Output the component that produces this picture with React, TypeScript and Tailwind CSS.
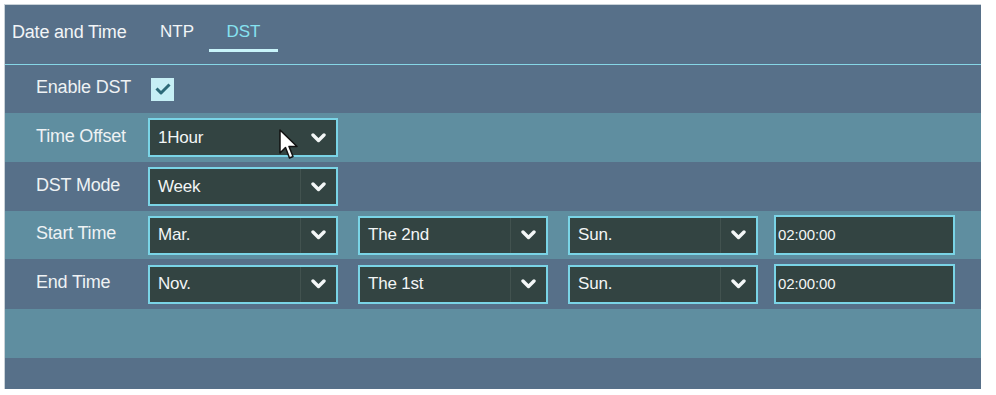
const Chevron = () => (
  <svg width="15" height="10" viewBox="0 0 15 10" className="block">
    <path d="M2 2 L7.5 7.5 L13 2" fill="none" stroke="#f4f7f7" strokeWidth="3.4" strokeLinecap="round" strokeLinejoin="round" />
  </svg>
);

const Select = ({ value, divider = true }: { value: string; divider?: boolean }) => (
  <div className="w-[190px] h-[39px] border-2 border-[#7ad4e6] bg-[#334442] flex items-center">
    <span className="flex-1 pl-2 text-[17px] tracking-[-0.2px] text-[#f2f5f5]">{value}</span>
    <div className={`w-[36px] h-full flex items-center justify-center ${divider ? "border-l border-[#42524f]" : ""}`}>
      <Chevron />
    </div>
  </div>
);

const TimeInput = ({ value }: { value: string }) => (
  <div className="w-[181px] h-[40px] border-2 border-[#7ad4e6] bg-[#334442] flex items-center">
    <span className="pl-[2px] text-[15px] tracking-[-0.1px] text-[#f2f5f5]">{value}</span>
  </div>
);

const Row = ({ label, light, children, h = "h-[49px]" }: { label?: string; light?: boolean; children?: React.ReactNode; h?: string }) => (
  <div className={`${h} flex items-center ${light ? "bg-[#5f8ea0]" : "bg-[#577089]"}`}>
    <div className="w-[143px] pl-[31px] text-[18px] tracking-[-0.2px] text-[#eef2f4] -mt-[3px]">{label}</div>
    <div className="flex items-center gap-[20px]">{children}</div>
  </div>
);

const Cursor = () => (
  <svg width="20" height="31" viewBox="0 0 20 31" className="absolute left-[274px] top-[124px]">
    <path d="M1 1 L1 24 L6.5 18.5 L10.5 29 L14 27.5 L10 17.5 L18 17.5 Z" fill="#ffffff" stroke="#111111" strokeWidth="1.5" strokeLinejoin="round" />
  </svg>
);

export default function App() {
  return (
    <div className="w-[996px] h-[395px] bg-white p-1 font-['Liberation_Sans',Arial,sans-serif]">
      <div className="relative w-[977px] h-[385px] bg-[#577089] border-l border-t border-[#c9d2d8] overflow-hidden">
        <div className="h-[59px] flex items-start pt-[14px] pl-[7px] text-[#f2f5f7]">
          <span className="w-[120px] text-[18px] tracking-[-0.2px]">Date and Time</span>
          <span className="ml-[28px] text-[17px]">NTP</span>
          <div className="ml-[15px] w-[69px] flex flex-col items-center">
            <span className="text-[17px] text-[#86e2f0]">DST</span>
            <div className="mt-[4px] w-[69px] h-[3px] bg-[#c8f4fa]" />
          </div>
        </div>
        <div className="h-[1px] bg-[#86d6e6]" />
        <Row label="Enable DST" h="h-[48px]">
          <div className="ml-[3px] w-[23px] h-[23px] bg-[#c6eff5] flex items-center justify-center">
            <svg width="18" height="14" viewBox="0 0 18 14">
              <path d="M2.5 6.5 L7 11 L15.5 2.5" fill="none" stroke="#2c6a78" strokeWidth="3" strokeLinejoin="round" />
            </svg>
          </div>
        </Row>
        <Row label="Time Offset" light>
          <Select value="1Hour" divider={false} />
        </Row>
        <Row label="DST Mode">
          <Select value="Week" />
        </Row>
        <Row label="Start Time" light h="h-[48px]">
          <Select value="Mar." />
          <Select value="The 2nd" />
          <Select value="Sun." />
          <div className="-ml-[4px]">
            <TimeInput value="02:00:00" />
          </div>
        </Row>
        <Row label="End Time" h="h-[50px]">
          <Select value="Nov." />
          <Select value="The 1st" />
          <Select value="Sun." />
          <div className="-ml-[4px]">
            <TimeInput value="02:00:00" />
          </div>
        </Row>
        <div className="h-[49px] bg-[#5f8ea0]" />
        <div className="h-[32px] bg-[#577089]" />
        <Cursor />
      </div>
    </div>
  );
}
